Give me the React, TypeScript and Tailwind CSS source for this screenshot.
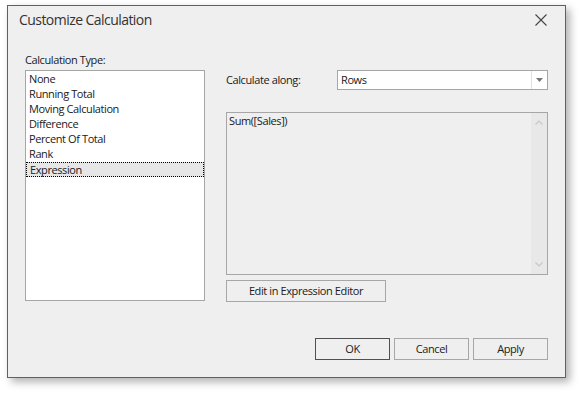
import React from "react";

const items = ["None", "Running Total", "Moving Calculation", "Difference", "Percent Of Total", "Rank", "Expression"];

export default function App() {
  const font = { fontFamily: '"Segoe UI", "Open Sans", "Noto Sans", sans-serif' };
  return (
    <div className="w-[579px] h-[393px] bg-white pt-[5px] pl-[7px] text-[#202020] tracking-[-0.4px]" style={font}>
      <div className="w-[559px] h-[373px] border border-[#1f6fbf] bg-[#efefef] shadow-[4px_4px_8px_rgba(0,0,0,0.3)] flex flex-col">
        {/* Title */}
        <div className="flex items-center h-[20px] mt-[4px] pl-[11px] pr-[18px]">
          <div className="text-[14px] leading-[20px] text-[#333] flex-1 tracking-[-0.55px]">Customize Calculation</div>
          <svg width="12" height="12" viewBox="0 0 12 12" className="mt-[-1px]">
            <path d="M0.5 0.5 L11.5 11.5 M11.5 0.5 L0.5 11.5" stroke="#444" strokeWidth="1.1" />
          </svg>
        </div>
        {/* Body */}
        <div className="flex mt-[23px] pl-[17px]">
          {/* Left */}
          <div className="flex flex-col w-[180px]">
            <div className="text-[11px] leading-[14px] h-[17px]">Calculation Type:</div>
            <div className="h-[231px] border border-[#a6a6a6] bg-white pt-[1px]">
              {items.map((it) => (
                <div
                  key={it}
                  className={
                    "h-[15px] text-[11px] leading-[14px] pl-[3px] " +
                    (it === "Expression" ? "bg-[#e6e6e6] border border-dotted border-black pl-[2px] leading-[13px]" : "")
                  }
                >
                  {it}
                </div>
              ))}
            </div>
          </div>
          {/* Right */}
          <div className="flex flex-col ml-[21px] w-[322px] pt-[17px]">
            <div className="flex items-center h-[20px]">
              <div className="text-[11px] w-[111px]">Calculate along:</div>
              <div className="flex-1 h-[20px] border border-[#a6a6a6] bg-white flex items-center">
                <div className="flex-1 text-[11px] pl-[3px]">Rows</div>
                <div className="w-[16px] h-full border-l border-[#e0e0e0] flex items-center justify-center">
                  <svg width="7" height="4" viewBox="0 0 7 4">
                    <path d="M0 0 L7 0 L3.5 4 Z" fill="#777" />
                  </svg>
                </div>
              </div>
            </div>
            <div className="mt-[22px] h-[163px] border border-[#a6a6a6] bg-[#efefef] flex">
              <div className="flex-1 text-[11px] leading-[14px] pl-[2px] pt-[1px]">Sum([Sales])</div>
              <div className="w-[16px] bg-[#e8e8e8] flex flex-col justify-between items-center py-[7px]">
                <svg width="8" height="5" viewBox="0 0 8 5">
                  <path d="M0.5 4.5 L4 1 L7.5 4.5" stroke="#c8c8c8" strokeWidth="1.2" fill="none" />
                </svg>
                <svg width="8" height="5" viewBox="0 0 8 5">
                  <path d="M0.5 0.5 L4 4 L7.5 0.5" stroke="#c8c8c8" strokeWidth="1.2" fill="none" />
                </svg>
              </div>
            </div>
            <div className="mt-[5px] w-[160px] h-[22px] border border-[#a6a6a6] flex items-center justify-center text-[11px]">
              Edit in Expression Editor
            </div>
          </div>
        </div>
        {/* Footer */}
        <div className="flex justify-end gap-[4px] pr-[17px] mt-[36px]">
          <div className="w-[75px] h-[22px] border border-[#505050] flex items-center justify-center text-[11px]">OK</div>
          <div className="w-[75px] h-[22px] border border-[#a6a6a6] flex items-center justify-center text-[11px]">Cancel</div>
          <div className="w-[75px] h-[22px] border border-[#a6a6a6] flex items-center justify-center text-[11px]">Apply</div>
        </div>
      </div>
    </div>
  );
}
